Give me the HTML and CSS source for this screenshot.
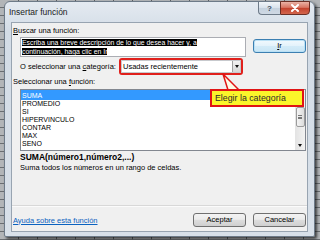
FILE: index.html
```html
<!DOCTYPE html>
<html lang="es">
<head>
<meta charset="utf-8">
<title>Insertar función</title>
<link rel="stylesheet" href="styles.css">
</head>
<body>
<div class="desk">
  <div class="window">
    <div class="titlebar">
      <span class="title">Insertar función</span>
      <div class="caps">
        <span class="cap-help">?</span>
        <span class="cap-close"><svg width="10" height="8" viewBox="0 0 10 8"><path d="M2 1 L8 7 M8 1 L2 7" stroke="#fff" stroke-width="2" stroke-linecap="round"/></svg></span>
      </div>
    </div>
    <div class="client">
      <div class="lbl"><u>B</u>uscar una función:</div>
      <div class="search-row">
        <div class="textbox"><span class="sel">Escriba una breve descripción de lo que desea hacer y, a<br>continuación, haga clic en Ir</span></div>
        <button class="btn btn-ir"><u>I</u>r</button>
      </div>
      <div class="cat-row">
        <span class="cat-lbl">O seleccionar una <u>c</u>ategoría:</span>
        <div class="cat-hl">
          <div class="combo">
            <span class="combo-text">Usadas recientemente</span>
            <span class="combo-arrow"><span class="tri"></span></span>
          </div>
        </div>
      </div>
      <div class="lbl lbl-fn">Seleccionar una <u>f</u>unción:</div>
      <div class="list">
        <div class="items">
          <div class="item item-sel">SUMA</div>
          <div class="item">PROMEDIO</div>
          <div class="item">SI</div>
          <div class="item">HIPERVINCULO</div>
          <div class="item">CONTAR</div>
          <div class="item">MAX</div>
          <div class="item">SENO</div>
        </div>
        <div class="sb">
          <span class="sb-arrow"><span class="tri tri-up"></span></span>
          <span class="sb-track"><span class="sb-thumb"><span class="grip"></span></span></span>
          <span class="sb-arrow"><span class="tri"></span></span>
        </div>
      </div>
      <div class="sig">SUMA(número1,número2,...)</div>
      <div class="desc">Suma todos los números en un rango de celdas.</div>
      <div class="sep"></div>
      <div class="footer">
        <a class="link" href="#">Ayuda sobre esta función</a>
        <button class="btn">Aceptar</button>
        <button class="btn">Cancelar</button>
      </div>
    </div>
  </div>
  <svg class="tail" width="320" height="240" viewBox="0 0 320 240">
    <polygon points="223,74 228,90 239,90" fill="#fdfbe6" stroke="#e01414" stroke-width="1.5" stroke-linejoin="round"/>
  </svg>
  <div class="callout">Elegir la categoría</div>
</div>
</body>
</html>
```
FILE: styles.css
```css
* { box-sizing: border-box; }
html, body { margin: 0; padding: 0; }
body {
  width: 320px;
  height: 240px;
  overflow: hidden;
  font-family: "Liberation Sans", Arial, sans-serif;
  background: #8e9296;
}
.desk {
  position: relative;
  width: 320px;
  height: 240px;
  padding: 1px 0 0 4px;
  background:
    repeating-linear-gradient(to right, transparent 0 18px, #5e6266 18px 19px),
    repeating-linear-gradient(to bottom, #b2b5b8 0 7px, #6a6e72 7px 8px);
}
.window {
  width: 311px;
  height: 236px;
  border: 1px solid #6d7a88;
  border-radius: 6px 6px 2px 2px;
  background: linear-gradient(#e4eaf1, #d3dce6 30px, #d8e0e9);
  display: flex;
  flex-direction: column;
  padding: 0 6px 4px;
  box-shadow: 2px 2px 3px rgba(0, 0, 0, 0.65);
}
.titlebar {
  height: 20px;
  margin: 0 -6px;
  padding-left: 4px;
  display: flex;
  align-items: flex-start;
}
.title {
  font-size: 8.5px;
  line-height: 10px;
  margin-top: 5px;
  color: #1b1b1b;
}
.caps {
  margin-left: auto;
  margin-right: 4px;
  margin-top: -1px;
  display: flex;
}
.cap-help {
  width: 22px;
  height: 14px;
  border: 1px solid #6d7a88;
  border-right: none;
  border-radius: 0 0 0 4px;
  background: linear-gradient(#f1f5f9, #d8e1eb 50%, #c5d1de 52%, #cfd9e4);
  font-size: 8px;
  font-weight: bold;
  color: #3b4b5c;
  display: flex;
  align-items: center;
  justify-content: center;
}
.cap-close {
  width: 30px;
  height: 14px;
  border: 1px solid #6b2f25;
  border-radius: 0 0 4px 0;
  background: linear-gradient(#eab3a6, #d87663 45%, #c3432e 52%, #d3664d);
  display: flex;
  align-items: center;
  justify-content: center;
}
.client {
  flex: 1;
  background: #f0f0f0;
  border: 1px solid #98a4b1;
  padding: 3px 1px 4px 1px;
  display: flex;
  flex-direction: column;
  font-size: 7.5px;
  color: #000;
}
.lbl {
  height: 10px;
  line-height: 10px;
  white-space: nowrap;
}
.lbl-fn { margin-top: 2px; }
.search-row {
  display: flex;
  align-items: flex-start;
  margin: 1px 0 0 7px;
  height: 20px;
}
.textbox {
  width: 226px;
  height: 20px;
  background: #fff;
  border: 1px solid #abadb3;
  padding: 1px 0 0 1px;
  font-size: 6.9px;
  line-height: 8.5px;
  white-space: nowrap;
  overflow: hidden;
}
.sel { background: #000; color: #fff; }
.btn {
  font-family: inherit;
  font-size: 7.5px;
  width: 53px;
  height: 14px;
  padding: 0;
  border: 1px solid #707070;
  border-radius: 3px;
  background: linear-gradient(#f3f3f3, #ebebeb 45%, #dddddd 50%, #cfcfcf);
  color: #000;
  line-height: 12px;
}
.btn-ir {
  margin: 2px 0 0 7px;
  border-color: #3c7fb1;
  background: linear-gradient(#f2f9fd, #e3f2fb 50%, #d3ebf8 52%, #c9e5f5);
  box-shadow: inset 0 0 0 1px #b9e0f5;
}
.cat-row {
  display: flex;
  align-items: center;
  margin: 1px 0 0 7px;
  height: 17px;
}
.cat-lbl {
  width: 99px;
  white-space: nowrap;
}
.cat-hl {
  width: 124px;
  height: 17px;
  border: 2px solid #e0201c;
  border-radius: 3px;
  display: flex;
}
.combo {
  flex: 1;
  display: flex;
  align-items: center;
  background: #fff;
  border: 1px solid #c7c9cd;
  padding: 0 0 0 1px;
}
.combo-text { flex: 1; white-space: nowrap; }
.combo-arrow {
  width: 8px;
  height: 100%;
  background: linear-gradient(#f3f3f3, #d6d6d6);
  border-left: 1px solid #a0a0a0;
  display: flex;
  align-items: center;
  justify-content: center;
}
.tri {
  width: 0;
  height: 0;
  border-left: 2.5px solid transparent;
  border-right: 2.5px solid transparent;
  border-top: 3px solid #111;
}
.tri-up {
  border-top: none;
  border-bottom: 3px solid #444;
}
.list {
  margin: 2px 0 0 7px;
  width: 286px;
  height: 62px;
  border: 1px solid #828790;
  background: #fff;
  display: flex;
}
.items {
  flex: 1;
  font-size: 7px;
}
.item {
  height: 8px;
  line-height: 8px;
  padding-left: 1px;
  white-space: nowrap;
}
.item-sel {
  height: 10px;
  padding-top: 2px;
  background: #3399ff;
  color: #fff;
}
.sb {
  width: 10px;
  display: flex;
  flex-direction: column;
  background: linear-gradient(to right, #e3e3e3, #f2f2f2);
}
.sb-arrow {
  height: 9px;
  display: flex;
  align-items: center;
  justify-content: center;
}
.sb-track {
  flex: 1;
  padding-top: 8px;
  display: flex;
  flex-direction: column;
  align-items: center;
}
.sb-thumb {
  width: 9px;
  height: 20px;
  border: 1px solid #9c9c9c;
  border-radius: 2px;
  background: linear-gradient(to right, #f4f4f4, #dcdcdc);
  display: flex;
  align-items: center;
  justify-content: center;
}
.grip {
  width: 4px;
  height: 4px;
  border-top: 1px solid #777;
  border-bottom: 1px solid #777;
  background: linear-gradient(transparent 1px, #777 1px 2px, transparent 2px);
}
.sig {
  margin: 1px 0 0 7px;
  font-weight: bold;
  font-size: 8.5px;
  line-height: 10px;
  white-space: nowrap;
}
.desc {
  margin: 1px 0 0 7px;
  line-height: 10px;
  white-space: nowrap;
}
.sep {
  margin: auto -1px 0;
  height: 2px;
  border-top: 1px solid #d8d8d8;
  border-bottom: 1px solid #fbfbfb;
}
.footer {
  display: flex;
  align-items: center;
  gap: 7px;
  margin-top: 6px;
  height: 14px;
}
.link {
  color: #0b62c0;
  text-decoration: underline;
  margin-right: auto;
}
.tail {
  position: absolute;
  left: 0;
  top: 0;
}
.callout {
  position: absolute;
  left: 210px;
  top: 89px;
  width: 94px;
  height: 18px;
  border: 2px solid #e01414;
  background: #fbf52a;
  color: #2a2a2a;
  font-size: 8.8px;
  line-height: 14px;
  padding-left: 3px;
  white-space: nowrap;
}
```
